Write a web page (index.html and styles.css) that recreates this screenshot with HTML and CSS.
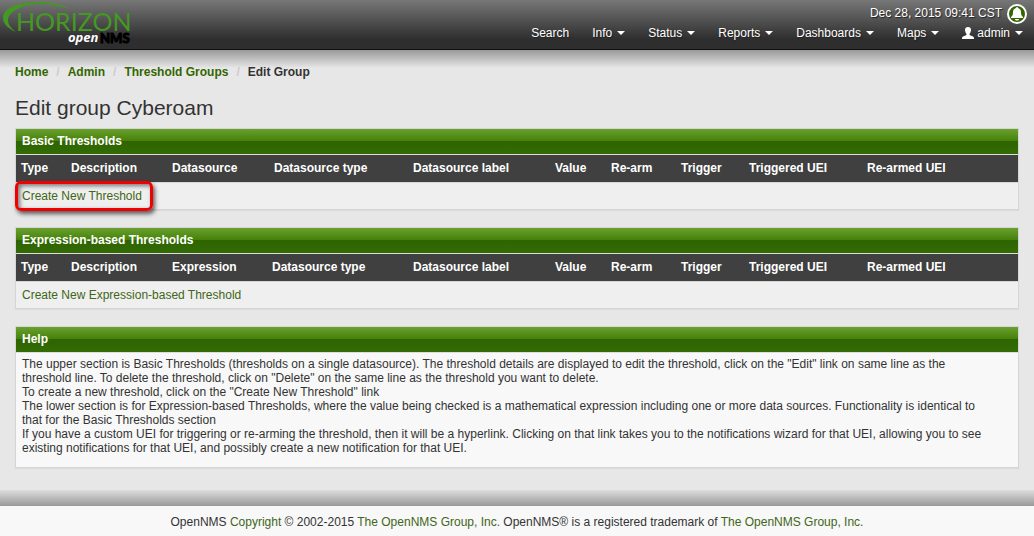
FILE: index.html
```
<!DOCTYPE html>
<html lang="en">
<head>
    <meta charset="UTF-8">
    <meta name="viewport" content="width=device-width, initial-scale=1.0">
    <title>Edit Group | OpenNMS Web Console</title>
    <link rel="stylesheet" href="styles.css">
</head>
<body>
    <header class="navbar">
        <a class="logo" href="#" aria-label="OpenNMS Horizon">
            <svg width="136" height="49" viewBox="0 0 136 49">
                <path class="swoosh" d="M16 32 C7 28 3 23 3 18 C3 7 20 2 40 2 C52 2 62 5 70 9 C60 6 50 4 40 4 C22 4 8 12 8 20 C8 25 12 29 16 32 Z"/>
                <text class="logo-name" x="16" y="31">HORIZON</text>
                <text class="logo-open" x="68" y="42">open</text>
                <text class="logo-nms" x="100" y="43">NMS</text>
            </svg>
        </a>
        <div class="navbar-right">
            <div class="clock">
                <span>Dec 28, 2015 09:41 CST</span>
                <svg class="bell" width="22" height="22" viewBox="0 0 22 22">
                    <circle cx="11" cy="11" r="9" fill="#336600" stroke="#fff" stroke-width="2"/>
                    <path fill="#fff" d="M11 4 C12 4 12 5 12 5 C15 6 15 8 15 10 C15 12 16 13 17 14 V15 H5 V14 C6 13 7 12 7 10 C7 8 7 6 10 5 C10 5 10 4 11 4 Z M9 16 H13 C13 18 9 18 9 16 Z"/>
                </svg>
            </div>
            <nav class="menu">
                <a href="#">Search</a>
                <a href="#">Info <span class="caret"></span></a>
                <a href="#">Status <span class="caret"></span></a>
                <a href="#">Reports <span class="caret"></span></a>
                <a href="#">Dashboards <span class="caret"></span></a>
                <a href="#">Maps <span class="caret"></span></a>
                <a href="#"><svg class="user" width="12" height="12" viewBox="0 0 12 12"><path fill="#fff" d="M6 0 C8 0 9 1 9 3 C9 5 8 6 7.500 7 V8 L11 9.500 C12 10 12 11 12 12 H0 C0 11 0 10 1 9.500 L4.500 8 V7 C4 6 3 5 3 3 C3 1 4 0 6 0 Z"/></svg> admin <span class="caret"></span></a>
            </nav>
        </div>
    </header>

    <main class="content">
        <ol class="breadcrumb">
            <li><a href="#">Home</a></li>
            <li><a href="#">Admin</a></li>
            <li><a href="#">Threshold Groups</a></li>
            <li>Edit Group</li>
        </ol>

        <h1>Edit group Cyberoam</h1>

        <section class="panel">
            <h2>Basic Thresholds</h2>
            <table>
                <colgroup>
                    <col class="col-type"><col class="col-desc"><col class="col-source"><col class="col-dstype"><col class="col-dslabel">
                    <col class="col-value"><col class="col-rearm"><col class="col-trigger"><col class="col-uei"><col>
                </colgroup>
                <thead>
                    <tr>
                        <th>Type</th>
                        <th>Description</th>
                        <th>Datasource</th>
                        <th>Datasource type</th>
                        <th>Datasource label</th>
                        <th>Value</th>
                        <th>Re-arm</th>
                        <th>Trigger</th>
                        <th>Triggered UEI</th>
                        <th>Re-armed UEI</th>
                    </tr>
                </thead>
                <tbody>
                    <tr>
                        <td colspan="10"><a class="marked" href="#">Create New Threshold</a></td>
                    </tr>
                </tbody>
            </table>
        </section>

        <section class="panel">
            <h2>Expression-based Thresholds</h2>
            <table>
                <colgroup>
                    <col class="col-type"><col class="col-desc"><col class="col-expr"><col class="col-exlabel"><col class="col-dslabel">
                    <col class="col-value"><col class="col-rearm"><col class="col-trigger"><col class="col-uei"><col>
                </colgroup>
                <thead>
                    <tr>
                        <th>Type</th>
                        <th>Description</th>
                        <th>Expression</th>
                        <th>Datasource type</th>
                        <th>Datasource label</th>
                        <th>Value</th>
                        <th>Re-arm</th>
                        <th>Trigger</th>
                        <th>Triggered UEI</th>
                        <th>Re-armed UEI</th>
                    </tr>
                </thead>
                <tbody>
                    <tr>
                        <td colspan="10"><a href="#">Create New Expression-based Threshold</a></td>
                    </tr>
                </tbody>
            </table>
        </section>

        <section class="panel">
            <h2>Help</h2>
            <div class="panel-body">
                <p>The upper section is Basic Thresholds (thresholds on a single datasource). The threshold details are displayed to edit the threshold, click on the "Edit" link on same line as the threshold line. To delete the threshold, click on "Delete" on the same line as the threshold you want to delete.</p>
                <p>To create a new threshold, click on the "Create New Threshold" link</p>
                <p>The lower section is for Expression-based Thresholds, where the value being checked is a mathematical expression including one or more data sources. Functionality is identical to that for the Basic Thresholds section</p>
                <p>If you have a custom UEI for triggering or re-arming the threshold, then it will be a hyperlink. Clicking on that link takes you to the notifications wizard for that UEI, allowing you to see existing notifications for that UEI, and possibly create a new notification for that UEI.</p>
            </div>
        </section>
    </main>

    <footer class="footer">
        <p>OpenNMS <a href="#">Copyright</a> © 2002-2015 <a href="#">The OpenNMS Group, Inc.</a> OpenNMS® is a registered trademark of <a href="#">The OpenNMS Group, Inc.</a></p>
    </footer>
</body>
</html>
```
FILE: styles.css
```
* {
    margin: 0;
    padding: 0;
    box-sizing: border-box;
}

body {
    font-family: 'Liberation Sans', Arial, sans-serif;
    font-size: 12px;
    line-height: 14px;
    color: #333;
    background: #e7e7e7;
}

a {
    color: #336600;
    text-decoration: none;
}

a:hover {
    text-decoration: underline;
}

/* Top bar */
.navbar {
    display: flex;
    justify-content: space-between;
    height: 50px;
    background: linear-gradient(to bottom, #777, #2e2e2e 80%);
    border-bottom: 1px solid #111;
}

.swoosh,
.logo-name {
    fill: #449922;
}

.logo-name {
    font: 25px Lato, sans-serif;
}

.logo-open {
    font: italic bold 13px 'Open Sans', sans-serif;
    fill: #fff;
}

.logo-nms {
    font: 900 13px Lato, sans-serif;
    fill: #000;
    stroke: #000;
}

.navbar-right {
    display: flex;
    flex-direction: column;
    align-items: flex-end;
    gap: 1px;
    padding-top: 3px;
    color: #fff;
    text-shadow: 1px 1px 1px #222;
}

.clock {
    display: flex;
    gap: 4px;
    line-height: 20px;
    padding-right: 6px;
}

.menu {
    display: flex;
    gap: 23px;
    padding-right: 11px;
}

.menu a {
    display: flex;
    align-items: center;
    color: #fff;
}

.caret {
    border-top: 4px solid #fff;
    border-left: 4px solid transparent;
    border-right: 4px solid transparent;
    margin-left: 5px;
}

.user {
    margin-right: 3px;
}

/* Page */
.content {
    padding: 15px 15px 21px;
    background:
        linear-gradient(to bottom, #999, #e7e7e7) top / 100% 18px no-repeat,
        linear-gradient(to top, #999, #ddd) bottom / 100% 16px no-repeat;
}

.breadcrumb {
    display: flex;
    list-style: none;
    font-weight: bold;
}

.breadcrumb li + li::before {
    content: '/';
    padding: 0 8px;
    color: #ccc;
}

h1 {
    font-size: 21px;
    font-weight: normal;
    line-height: 24px;
    margin: 17px 0 8px;
}

.panel {
    margin-bottom: 17px;
    background: #f8f8f8;
    border: 1px solid #d6d6d6;
    box-shadow: 0 1px 1px rgba(0, 0, 0, 0.05);
}

.panel h2 {
    padding: 5px 6px 6px;
    font-size: 12px;
    line-height: 14px;
    color: #fff;
    background: linear-gradient(to bottom, #6aa02f, #458109 48%, #2f6400 48%, #336b05);
    border-bottom: 1px solid #ddd;
}

table {
    width: 100%;
    table-layout: fixed;
    border-collapse: collapse;
}

th {
    padding: 6px 5px;
    text-align: left;
    line-height: 15px;
    color: #fff;
    background: #404040;
}

td {
    padding: 6px;
    background: #efefef;
    border-top: 1px solid #d6d6d6;
}

td a,
.footer a {
    color: #406618;
}

.col-type { width: 50px; }
.col-desc { width: 101px; }
.col-source { width: 102px; }
.col-expr { width: 100px; }
.col-dstype { width: 139px; }
.col-dslabel { width: 142px; }
.col-exlabel { width: 141px; }
.col-value { width: 56px; }
.col-rearm { width: 70px; }
.col-trigger { width: 68px; }
.col-uei { width: 118px; }

/* Red marker around the link */
.marked {
    position: relative;
}

.marked::after {
    content: '';
    position: absolute;
    inset: -8px -11px -8px -7px;
    border: 3px solid #f00000;
    border-radius: 6px;
    box-shadow: 2px 3px 4px rgba(0, 0, 0, 0.6), inset 2px 2px 4px rgba(0, 0, 0, 0.5);
}

.panel-body {
    padding: 4px 24px 12px 6px;
}

.footer {
    padding: 9px 15px 8px;
    text-align: center;
    background: #f8f8f8;
}
```
